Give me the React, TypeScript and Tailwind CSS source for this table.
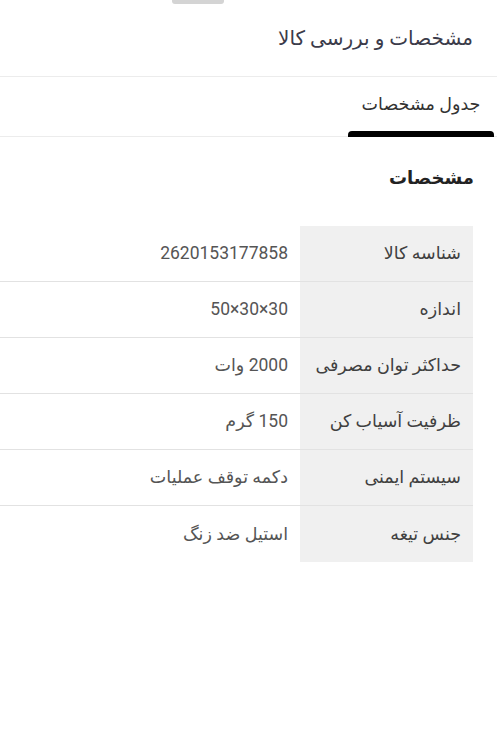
import React from "react";

const rows: [string, string][] = [
  ["شناسه کالا", "2620153177858"],
  ["اندازه", "50×30×30"],
  ["حداکثر توان مصرفی", "2000 وات"],
  ["ظرفیت آسیاب کن", "150 گرم"],
  ["سیستم ایمنی", "دکمه توقف عملیات"],
  ["جنس تیغه", "استیل ضد زنگ"],
];

export default function App() {
  return (
    <div
      dir="rtl"
      className="relative w-[497px] h-[753px] bg-white overflow-hidden"
      style={{ fontFamily: "Roboto, 'DejaVu Sans', sans-serif" }}
    >
      <div className="absolute top-[-4px] left-[172px] w-[52px] h-[8px] rounded-[3px] bg-[#d4d4d4]" />
      <div className="h-[77px] flex items-center pr-[24px] border-b border-[#ececec]">
        <h1 className="text-[20px] text-[#3b3b4a] font-medium">مشخصات و بررسی کالا</h1>
      </div>
      <div className="h-[60px] flex border-b border-[#ececec] pr-[3px]">
        <div className="relative w-[146px] flex items-center justify-center pb-[4px]">
          <span className="text-[17.5px] text-[#333]">جدول مشخصات</span>
          <div className="absolute bottom-[-1px] left-0 right-0 h-[6px] rounded-t-[4px] bg-black" />
        </div>
      </div>
      <div className="h-[89px] pr-[23px] pt-[27px]">
        <h2 className="text-[18px] font-semibold text-[#222]">مشخصات</h2>
      </div>
      <div className="mr-[24px]">
        {rows.map(([k, v], i) => (
          <div
            key={k}
            className={`flex h-[56px] ${i < rows.length - 1 ? "border-b border-[#e2e2e2]" : ""}`}
          >
            <div className="w-[173px] shrink-0 bg-[#f0f0f0] flex items-center pr-[12px] text-[17.5px] text-[#404040]">
              {k}
            </div>
            <div className="flex-1 flex items-center pr-[12px] text-[17.5px] text-[#555]">
              <span dir={/^[0-9×]+$/.test(v) ? "ltr" : "rtl"}>{v}</span>
            </div>
          </div>
        ))}
      </div>
    </div>
  );
}
